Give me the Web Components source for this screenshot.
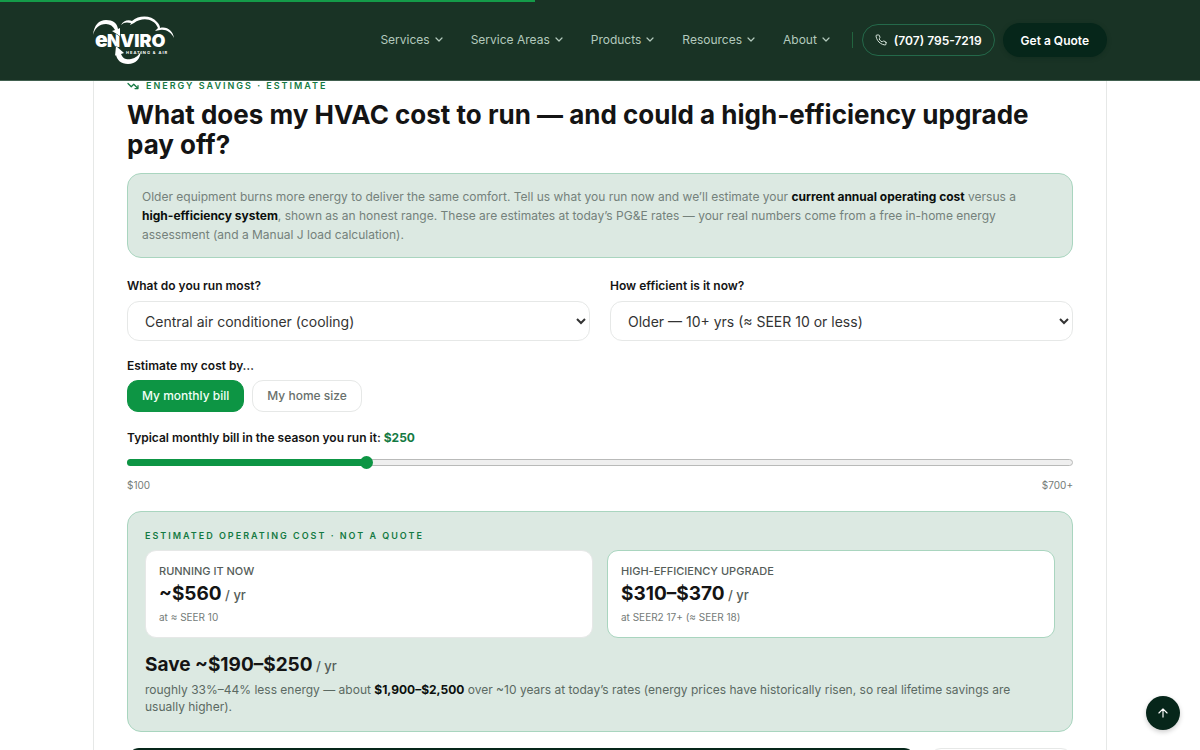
<!DOCTYPE html>
<html lang="en">
<head>
<meta charset="utf-8">
<meta name="viewport" content="width=device-width, initial-scale=1">
<title>Enviro Heating &amp; Air – Energy Savings Estimate</title>
<style>
  :root {
    --green: #0d9544;
    --green-text: #147a43;
    --forest: #193325;
    --deep: #06261a;
    --mint: #dce9e2;
    --mint-line: #a9d5bf;
    --line: #e6e8e7;
    --ink: #141414;
    --muted: #74817b;
  }
  body {
    margin: 0;
    background: #fff;
    color: var(--ink);
    font-family: Inter, "Open Sans", sans-serif;
    font-size: 12px;
  }
</style>
</head>
<body>
<site-header>
  <nav-item>Services</nav-item>
  <nav-item>Service Areas</nav-item>
  <nav-item>Products</nav-item>
  <nav-item>Resources</nav-item>
  <nav-item>About</nav-item>
</site-header>
<main>
  <savings-card>
    <span slot="eyebrow">Energy savings · Estimate</span>
    <span slot="title">What does my HVAC cost to run — and could a high-efficiency upgrade pay off?</span>
    <intro-note slot="intro">Older equipment burns more energy to deliver the same comfort. Tell us what you run now and we’ll estimate your <b>current annual operating cost</b> versus a <b>high-efficiency system</b>, shown as an honest range. These are estimates at today’s PG&amp;E rates — your real numbers come from a free in-home energy assessment (and a Manual J load calculation).</intro-note>
    <select-field label="What do you run most?" value="Central air conditioner (cooling)"></select-field>
    <select-field label="How efficient is it now?" value="Older — 10+ yrs (≈ SEER 10 or less)"></select-field>
    <mode-switch slot="mode"></mode-switch>
    <bill-slider slot="slider"></bill-slider>
    <result-panel slot="result">
      <cost-tile label="Running it now" amount="~$560" note="at ≈ SEER 10"></cost-tile>
      <cost-tile highlight label="High-efficiency upgrade" amount="$310–$370" note="at SEER2 17+ (≈ SEER 18)"></cost-tile>
    </result-panel>
    <card-actions slot="actions"></card-actions>
  </savings-card>
</main>
<back-to-top></back-to-top>

<script>
class Base extends HTMLElement {
  connectedCallback() {
    if (this.shadowRoot) return;
    const t = document.createElement('template');
    t.innerHTML = '<style>*{box-sizing:border-box}:host{display:block}</style>' + this.view();
    this.attachShadow({ mode: 'open' }).append(t.content.cloneNode(true));
    this.ready?.();
  }
}

customElements.define('brand-logo', class extends Base {
  view() { return `
    <style>
      a { display: block; }
      svg { display: block; width: 82px; height: 50px; fill: #fff; }
      text { font-family: Inter, sans-serif; }
      .arrow { stroke: #193325; stroke-width: 1; paint-order: stroke; }
    </style>
    <a href="#" aria-label="Enviro Heating &amp; Air home">
      <svg viewBox="0 0 82 50">
        <path d="M28 10c2-4 7-6 11-4C46 0 58 0 64 7c2 2 3 4 3 6 7-2 13 3 14 10-3-6-8-9-14-8l-5 1 3-3C61 3 49 2 41 8l-4 2 1-2c-4-1-7-1-10 2z"/>
        <text x="2" y="32" font-size="21" font-weight="900">e</text>
        <text x="14" y="32" font-size="17" font-weight="900">N</text>
        <text x="27" y="32" font-size="18" font-weight="900">VIRO</text>
        <path class="arrow" d="M0 20C1 10 6 5 13 5c7 0 11 3 12 9l2-1v8l-8-5 3-1c-2-4-5-6-9-6C6 9 2 13 0 20z"/>
        <path class="arrow" d="M23 31l8 7-3 1c2 5 6 6 10 5 5-1 8-4 10-8-1 8-5 13-13 13-7 0-11-4-12-9l-1 1z"/>
        <text x="33" y="39" font-size="4" font-weight="700" letter-spacing="1">HEATING &amp; AIR</text>
      </svg>
    </a>`; }
});

customElements.define('nav-item', class extends Base {
  view() { return `
    <style>
      button { display: flex; align-items: center; gap: 5px; padding: 0; border: 0; background: none;
        color: #b3cabd; font: 400 12px/18px Inter, sans-serif; cursor: pointer; white-space: nowrap; }
      svg { width: 8px; height: 6px; fill: none; stroke: #b3cabd; stroke-width: 1.2; stroke-linecap: round; stroke-linejoin: round; }
    </style>
    <button type="button" aria-haspopup="true"><slot></slot><svg viewBox="0 0 8 6"><path d="M1 1l3 3 3-3"/></svg></button>`; }
});

customElements.define('site-header', class extends Base {
  view() { return `
    <style>
      :host { position: fixed; inset: 0 0 auto; z-index: 5; }
      .progress { position: absolute; top: 0; left: 0; width: 44.6%; height: 2px; background: #149b49; }
      header { background: var(--forest); border-bottom: 1px solid #41604f; }
      .bar { width: calc(100% - 32px); max-width: 1014px; height: 80px; margin: 0 auto;
        display: flex; align-items: center; justify-content: space-between; }
      nav { display: flex; align-items: center; gap: 28px; }
      .right { display: flex; align-items: center; }
      .rule { width: 1px; height: 16px; margin: 0 9px 0 22px; background: #22643f; }
      .call, .quote { display: flex; align-items: center; gap: 7px; height: 32px; border-radius: 17px;
        color: #fff; font-size: 12px; font-weight: 600; text-decoration: none; white-space: nowrap; }
      .call { padding: 0 12px; border: 1px solid #24694a; }
      .call svg { width: 12px; height: 12px; fill: none; stroke: #d5e4db; stroke-width: 2; stroke-linecap: round; stroke-linejoin: round; }
      .quote { height: 34px; margin-left: 8px; padding: 0 18px; background: var(--deep); box-shadow: 0 1px 4px #0a261a66; }
    </style>
    <header>
      <div class="progress"></div>
      <div class="bar">
        <brand-logo></brand-logo>
        <div class="right">
          <nav aria-label="Main"><slot></slot></nav>
          <span class="rule"></span>
          <a class="call" href="tel:7077957219"><svg viewBox="0 0 24 24"><path d="M22 16.9v3a2 2 0 0 1-2.2 2 19.8 19.8 0 0 1-8.6-3.1 19.5 19.5 0 0 1-6-6A19.8 19.8 0 0 1 2.1 4.2 2 2 0 0 1 4.1 2h3a2 2 0 0 1 2 1.7c.1 1 .4 1.9.7 2.8a2 2 0 0 1-.5 2.1L8.1 9.9a16 16 0 0 0 6 6l1.3-1.3a2 2 0 0 1 2.1-.4c.9.3 1.8.6 2.8.7a2 2 0 0 1 1.7 2z"/></svg>(707) 795-7219</a>
          <a class="quote" href="#quote">Get a Quote</a>
        </div>
      </div>
    </header>`; }
});

customElements.define('savings-card', class extends Base {
  view() { return `
    <style>
      section { width: calc(100% - 32px); max-width: 1014px; margin: 0 auto; padding: 79px 33px 32px;
        border: 1px solid var(--line); border-top: 0; background: #fff; }
      .eyebrow { display: flex; align-items: center; gap: 7px; margin: 0; color: var(--green-text);
        font-size: 9px; line-height: 14px; font-weight: 600; letter-spacing: 2px; text-transform: uppercase; }
      .eyebrow svg { width: 12px; height: 12px; fill: none; stroke: currentColor; stroke-width: 2.5; stroke-linecap: round; stroke-linejoin: round; }
      h2 { margin: 7px 0 13px; font-size: 26px; line-height: 30px; font-weight: 700; }
      .fields { display: grid; grid-template-columns: 1fr 1fr; gap: 20px; margin: 19px 0 16px; }
    </style>
    <section>
      <p class="eyebrow"><svg viewBox="0 0 24 24"><path d="M22 17l-8.5-8.5-5 5L2 7M16 17h6v-6"/></svg><slot name="eyebrow"></slot></p>
      <h2><slot name="title"></slot></h2>
      <slot name="intro"></slot>
      <div class="fields"><slot></slot></div>
      <slot name="mode"></slot>
      <slot name="slider"></slot>
      <slot name="result"></slot>
      <slot name="actions"></slot>
    </section>`; }
});

customElements.define('intro-note', class extends Base {
  view() { return `
    <style>
      :host { padding: 13px 14px; border: 1px solid var(--mint-line); border-radius: 14px; background: var(--mint); }
      p { margin: 0; color: var(--muted); font-size: 12px; line-height: 19px; }
      ::slotted(b) { color: #0b0f0d; font-weight: 700; white-space: nowrap; }
    </style>
    <p><slot></slot></p>`; }
});

customElements.define('select-field', class extends Base {
  view() { return `
    <style>
      label { display: block; margin-bottom: 6px; font-size: 12px; line-height: 18px; font-weight: 600; }
      select { display: block; width: 100%; height: 40px; padding: 0 0 0 13px; border: 1px solid var(--line);
        border-radius: 12px; background: #fff; color: #333; font: 400 14px Inter, sans-serif; }
    </style>
    <label for="s">${this.getAttribute('label')}</label>
    <select id="s"><option>${this.getAttribute('value')}</option></select>`; }
});

customElements.define('mode-switch', class extends Base {
  view() { return `
    <style>
      .label { margin: 0 0 5px; font-size: 12px; line-height: 18px; font-weight: 600; }
      .row { display: flex; gap: 8px; }
      button { height: 32px; padding: 0 14px; border: 1px solid var(--line); border-radius: 11px; background: #fff;
        color: #68706c; font: 500 12px/18px Inter, sans-serif; cursor: pointer; }
      button[aria-pressed=true] { background: var(--green); border-color: var(--green); color: #f1fff6; }
    </style>
    <p class="label" id="l">Estimate my cost by…</p>
    <div class="row" role="group" aria-labelledby="l">
      <button type="button" aria-pressed="true">My monthly bill</button>
      <button type="button" aria-pressed="false">My home size</button>
    </div>`; }
  ready() {
    const buttons = [...this.shadowRoot.querySelectorAll('button')];
    buttons.forEach(b => b.onclick = () => buttons.forEach(o => o.setAttribute('aria-pressed', o === b)));
  }
});

customElements.define('bill-slider', class extends Base {
  view() { return `
    <style>
      :host { margin: 17px 0 19px; --pos: 25%; }
      label { display: block; font-size: 12px; line-height: 18px; font-weight: 600; }
      output { color: var(--green-text); font-weight: 700; }
      .range { display: grid; align-items: center; margin: 9px 0; }
      .range > * { grid-area: 1 / 1; }
      .track { height: 7px; border: 1px solid #b9bab9; border-radius: 4px; background: #efefef; }
      .fill { width: var(--pos); height: 7px; border-radius: 4px; background: var(--green); }
      input { appearance: none; width: 100%; height: 13px; margin: 0; background: none; }
      input::-webkit-slider-thumb { appearance: none; width: 13px; height: 13px; border-radius: 50%; background: var(--green); }
      .ends { display: flex; justify-content: space-between; color: #747b78; font-size: 10px; line-height: 14px; }
    </style>
    <label for="r">Typical monthly bill in the season you run it: <output>$250</output></label>
    <div class="range"><span class="track"></span><span class="fill"></span><input id="r" type="range" min="100" max="700" step="10" value="250"></div>
    <div class="ends"><span>$100</span><span>$700+</span></div>`; }
  ready() {
    const input = this.shadowRoot.querySelector('input');
    input.oninput = () => {
      this.shadowRoot.querySelector('output').textContent = '$' + input.value;
      this.style.setProperty('--pos', (input.value - 100) / 6 + '%');
    };
  }
});

customElements.define('cost-tile', class extends Base {
  view() { return `
    <style>
      :host { padding: 13px; border: 1px solid var(--line); border-radius: 11px; background: #fff; }
      :host([highlight]) { border-color: var(--mint-line); }
      p { margin: 0; }
      .label { color: #555d59; font-size: 11px; line-height: 14px; font-weight: 500; text-transform: uppercase; }
      .amount { margin: 4px 0; font-size: 19px; line-height: 24px; font-weight: 700; }
      .amount span { color: #555d59; font-size: 13px; line-height: 13px; font-weight: 500; }
      .note { color: #747b78; font-size: 10px; line-height: 14px; }
    </style>
    <p class="label">${this.getAttribute('label')}</p>
    <p class="amount">${this.getAttribute('amount')}<span> / yr</span></p>
    <p class="note">${this.getAttribute('note')}</p>`; }
});

customElements.define('result-panel', class extends Base {
  view() { return `
    <style>
      :host { padding: 17px 17px 16px; border: 1px solid var(--mint-line); border-radius: 14px; background: var(--mint); }
      h3 { margin: 0 0 7px; color: var(--green-text); font-size: 9px; line-height: 14px; font-weight: 600;
        letter-spacing: 2px; text-transform: uppercase; }
      .tiles { display: grid; grid-template-columns: 1fr 1fr; gap: 14px; }
      p { margin: 0; }
      .save { margin: 14px 0 3px; font-size: 19px; line-height: 26px; font-weight: 700; }
      .save span { color: #555d59; font-size: 13px; line-height: 13px; font-weight: 500; }
      .detail { color: #5b6962; font-size: 12px; line-height: 17px; }
      b { color: #0b0f0d; font-weight: 700; }
    </style>
    <h3>Estimated operating cost · Not a quote</h3>
    <div class="tiles"><slot></slot></div>
    <p class="save">Save ~$190–$250<span> / yr</span></p>
    <p class="detail">roughly 33%–44% less energy — about <b>$1,900–$2,500</b> over ~10 years at today’s rates (energy prices have historically risen, so real lifetime savings are usually&nbsp;higher).</p>`; }
});

customElements.define('card-actions', class extends Base {
  view() { return `
    <style>
      :host { display: flex; gap: 13px; margin-top: 16px; }
      button { height: 40px; border-radius: 12px; border: 1px solid var(--line); background: #fff; }
      .main { flex: 1; border-color: var(--deep); background: var(--deep); }
      .side { flex: 0 0 144px; }
    </style>
    <button class="main" type="button" aria-label="Get a free energy assessment"></button>
    <button class="side" type="button" aria-label="Call us"></button>`; }
});

customElements.define('back-to-top', class extends Base {
  view() { return `
    <style>
      :host { position: fixed; right: 20px; bottom: 20px; z-index: 4; }
      button { display: grid; place-items: center; width: 34px; height: 34px; padding: 0; border: 0; border-radius: 50%;
        background: var(--deep); box-shadow: 0 2px 5px #0003; cursor: pointer; }
      svg { width: 14px; height: 14px; fill: none; stroke: #fff; stroke-width: 2; stroke-linecap: round; stroke-linejoin: round; }
    </style>
    <button type="button" aria-label="Back to top"><svg viewBox="0 0 24 24"><path d="M12 19V5M5 12l7-7 7 7"/></svg></button>`; }
  ready() { this.shadowRoot.querySelector('button').onclick = () => scrollTo({ top: 0, behavior: 'smooth' }); }
});
</script>
</body>
</html>
